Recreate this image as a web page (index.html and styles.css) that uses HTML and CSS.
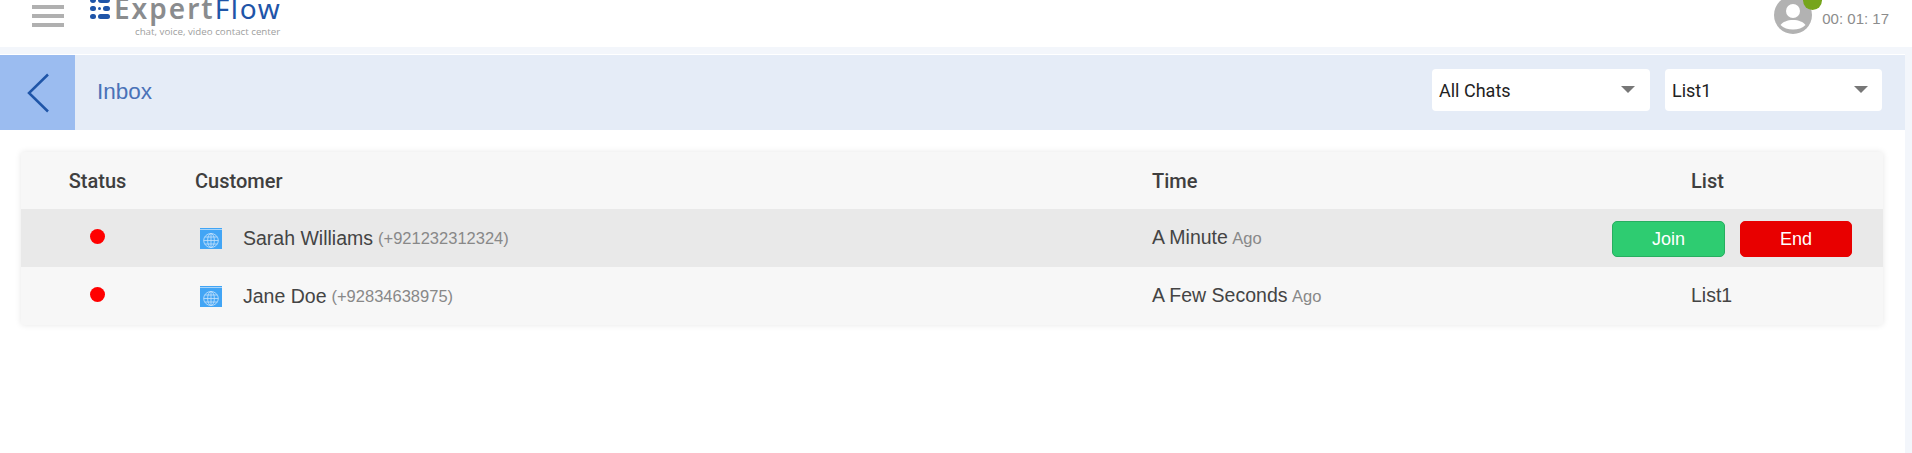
FILE: index.html
```html
<!DOCTYPE html>
<html>
<head>
    <title>ExpertFlow Inbox</title>
    <link rel="stylesheet" href="styles.css">
</head>
<body>
    <div class="topbar">
        <div class="burger"><span></span><span></span><span></span></div>
        <div class="logo">
            <svg class="logo-mark" width="20" height="20" viewBox="0 0 20 20">
                <g fill="#1f55a8">
                    <rect x="0" y="-3" width="6" height="6" rx="3"/>
                    <rect x="8" y="-3" width="12" height="6" rx="3"/>
                    <rect x="0" y="6" width="6" height="5" rx="2.500"/>
                    <rect x="8" y="7" width="3" height="3" rx="1.500"/>
                    <rect x="13" y="6" width="7" height="5" rx="2.500"/>
                    <rect x="0" y="14" width="6" height="5" rx="2.500"/>
                    <rect x="8" y="14" width="12" height="5" rx="2.500"/>
                </g>
            </svg>
            <div class="logo-text">
                <div class="logo-name">Expert<span>Flow</span></div>
                <div class="logo-tag">chat, voice, video contact center</div>
            </div>
        </div>
        <div class="agent">
            <div class="avatar">
                <svg width="38" height="38" viewBox="0 0 38 38">
                    <circle cx="19" cy="19" r="19" fill="#b2b2b2"/>
                    <circle cx="19" cy="15" r="7" fill="#fff"/>
                    <path d="M6.500 29c2-3 7-5 12.500-5s10.500 2 12.500 5c-3 3-7.500 4.500-12.500 4.500s-9.500-1.500-12.500-4.500z" fill="#fff"/>
                </svg>
                <span class="online"></span>
            </div>
            <span class="timer">00: 01: 17</span>
        </div>
    </div>

    <div class="page">
        <div class="titlebar">
            <div class="back">
                <svg width="24" height="40" viewBox="0 0 24 40">
                    <path d="M22 1.500L3 20l19 18.500" fill="none" stroke="#1f55a8" stroke-width="2.500"/>
                </svg>
            </div>
            <div class="title">Inbox</div>
            <div class="filter">All Chats<i class="caret"></i></div>
            <div class="filter">List1<i class="caret"></i></div>
        </div>

        <div class="card">
            <div class="row head">
                <div class="col-status">Status</div>
                <div>Customer</div>
                <div>Time</div>
                <div>List</div>
            </div>
            <div class="row hover">
                <div class="col-status"><span class="dot"></span></div>
                <div class="customer">
                    <svg class="web" width="22" height="21" viewBox="0 0 21 21" preserveAspectRatio="none">
                        <rect width="21" height="21" fill="#42a5f5"/>
                        <rect y="1" width="21" height="1" fill="#a9d5fa"/>
                        <g fill="none" stroke="#c4e2fb" stroke-width="0.800">
                            <circle cx="10.500" cy="12.500" r="7"/>
                            <ellipse cx="10.500" cy="12.500" rx="3.200" ry="7"/>
                            <path d="M10.500 5.500v14M3.500 12.500h14M4.500 9h12M4.500 16h12"/>
                        </g>
                    </svg>
                    <span class="name">Sarah Williams</span><span class="sub">(+921232312324)</span>
                </div>
                <div class="when"><span class="name">A Minute</span> <span class="sub">Ago</span></div>
                <div class="actions">
                    <button class="btn join">Join</button>
                    <button class="btn end">End</button>
                </div>
            </div>
            <div class="row">
                <div class="col-status"><span class="dot"></span></div>
                <div class="customer">
                    <svg class="web" width="22" height="21" viewBox="0 0 21 21" preserveAspectRatio="none">
                        <rect width="21" height="21" fill="#42a5f5"/>
                        <rect y="1" width="21" height="1" fill="#a9d5fa"/>
                        <g fill="none" stroke="#c4e2fb" stroke-width="0.800">
                            <circle cx="10.500" cy="12.500" r="7"/>
                            <ellipse cx="10.500" cy="12.500" rx="3.200" ry="7"/>
                            <path d="M10.500 5.500v14M3.500 12.500h14M4.500 9h12M4.500 16h12"/>
                        </g>
                    </svg>
                    <span class="name">Jane Doe</span><span class="sub">(+92834638975)</span>
                </div>
                <div class="when"><span class="name">A Few Seconds</span> <span class="sub">Ago</span></div>
                <div class="name when">List1</div>
            </div>
        </div>
    </div>
</body>
</html>
```

FILE: styles.css
```css
html {
    font-family: "Liberation Sans", Arial, sans-serif;
}
body {
    margin: 0;
    height: 453px;
    overflow: hidden;
    background: #fff;
}

.topbar {
    display: flex;
    align-items: flex-start;
    height: 47px;
    overflow: hidden;
}
.burger {
    display: flex;
    flex-direction: column;
    gap: 5px;
    width: 32px;
    margin: 5px 0 0 32px;
}
.burger span {
    height: 4px;
    background: #b0b0b0;
}
.logo {
    display: flex;
    margin-left: 26px;
}
.logo-mark {
    display: block;
    overflow: visible;
}
.logo-text {
    margin-left: 4px;
    text-align: right;
}
.logo-name {
    font-family: "Noto Sans", sans-serif;
    font-size: 28px;
    font-weight: 600;
    line-height: 18px;
    margin-top: -1px;
    letter-spacing: 2px;
    color: #8a8c8e;
}
.logo-name span {
    color: #1f55a8;
    font-weight: 400;
    letter-spacing: 1.600px;
}
.logo-tag {
    font-family: "Open Sans", sans-serif;
    font-size: 9.750px;
    line-height: 12px;
    margin: 9px 1px 0 0;
    color: #a0a0a0;
}
.agent {
    display: flex;
    margin-left: auto;
    margin-right: 23px;
}
.avatar {
    position: relative;
    width: 38px;
    height: 38px;
    margin-top: -4px;
}
.avatar svg {
    display: block;
}
.online {
    position: absolute;
    top: -5px;
    left: 29px;
    width: 19px;
    height: 19px;
    border-radius: 50%;
    background: #76a51c;
}
.timer {
    margin: 10px 0 0 10px;
    font-size: 15px;
    line-height: 17px;
    color: #8c8c8c;
}

.page {
    height: 406px;
    padding-top: 8px;
    box-sizing: border-box;
    background: linear-gradient(#f3f6fb 7px, #fff 7px);
    border-right: 7px solid #f3f6fb;
}
.titlebar {
    display: flex;
    align-items: center;
    height: 75px;
    background: #e5ecf7;
}
.back {
    display: flex;
    align-items: center;
    justify-content: center;
    width: 75px;
    height: 75px;
    background: #9bbcf0;
}
.title {
    margin: 0 auto 2px 22px;
    font-size: 22.500px;
    color: #4a72b8;
}
.filter {
    display: flex;
    align-items: center;
    justify-content: space-between;
    box-sizing: border-box;
    width: 218px;
    height: 42px;
    margin: 0 15px 5px 0;
    padding: 0 15px 0 7px;
    background: #fff;
    border-radius: 4px;
    font-family: Roboto, sans-serif;
    font-size: 18px;
    color: #222;
}
.filter:last-child {
    width: 217px;
    margin-right: 23px;
    padding-right: 14px;
}
.caret {
    width: 0;
    height: 0;
    margin-bottom: 1px;
    border-left: 7px solid transparent;
    border-right: 7px solid transparent;
    border-top: 7px solid #777;
}

.card {
    margin: 22px 22px 0 21px;
    background: #f7f7f7;
    border-radius: 3px;
    box-shadow: 0 0 6px rgba(0, 0, 0, 0.1);
}
.row {
    display: grid;
    grid-template-columns: 153px 955px 540px 1fr;
    align-items: center;
    height: 58px;
    color: #444;
}
.row > div:nth-child(n+2) {
    padding-left: 23px;
}
.row > div:nth-child(2) {
    padding-left: 21px;
}
.row > div:nth-child(4) {
    padding-left: 22px;
}
.head {
    height: 57px;
    font-family: Roboto, sans-serif;
    font-size: 20px;
    font-weight: 500;
    color: #3f3f3f;
}
.hover {
    background: #e9e9e9;
}
.col-status {
    display: flex;
    justify-content: center;
}
.dot {
    width: 15px;
    height: 15px;
    margin-bottom: 3px;
    border-radius: 50%;
    background: #f00;
}
.customer {
    display: flex;
    align-items: center;
}
.customer .sub {
    margin-left: 5px;
}
.web {
    margin: 0 21px 0 5px;
}
.when {
    margin-bottom: 2px;
}
.name {
    font-size: 19.500px;
    color: #444;
}
.sub {
    font-size: 16.500px;
    color: #888;
}
.actions {
    display: flex;
    gap: 15px;
    margin: 2px 0 0 -79px;
}
.btn {
    width: 113px;
    height: 36px;
    padding: 0;
    border: 1px solid;
    border-radius: 5px;
    font-family: "Liberation Sans", Arial, sans-serif;
    font-size: 18px;
    color: #fff;
}
.end {
    width: 112px;
    background: #e80000;
    border-color: #e80000;
}
.join {
    background: #2ecc71;
    border-color: #27ae60;
}
```
